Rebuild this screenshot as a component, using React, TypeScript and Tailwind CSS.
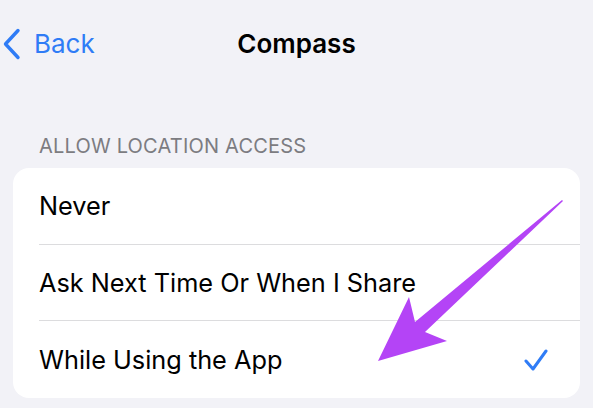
import React from "react";

const options = [
  { id: 1, label: "Never", checked: false },
  { id: 2, label: "Ask Next Time Or When I Share", checked: false },
  { id: 3, label: "While Using the App", checked: true },
];

const App: React.FC = () => {
  return (
    <div
      className="relative w-[593px] h-[408px] overflow-hidden bg-[#f2f2f7]"
      style={{ fontFamily: "Inter, 'Liberation Sans', sans-serif" }}
    >
      {/* Nav bar */}
      <div className="relative flex items-center h-[44px] mt-[22px]">
        <div className="flex items-center gap-[13px] pl-[3px] text-[#2f7cf6]">
          <svg width="18" height="32" viewBox="0 0 18 32" fill="none">
            <path d="M15 2.5 L2.5 16 L15 29.5" stroke="#2f7cf6" strokeWidth="3.4" strokeLinecap="round" strokeLinejoin="round" />
          </svg>
          <span className="text-[26px] leading-none">Back</span>
        </div>
        <div className="absolute inset-x-0 text-center text-[26px] font-semibold leading-none text-black">
          Compass
        </div>
      </div>

      {/* Section header */}
      <p className="mt-[70px] pl-[39px] text-[20px] leading-none text-[#7c7c81] tracking-[0.01em]">
        ALLOW LOCATION ACCESS
      </p>

      {/* Options card */}
      <div className="mx-[13px] mt-[12px] w-[567px] rounded-[16px] bg-white">
        {options.map((o, i) => (
          <div key={o.id} className="pl-[26px]">
            <div
              className={
                "flex items-center justify-between pr-[32px] " +
                (i === 1 ? "h-[76px] " : "h-[77px] ") +
                (i < options.length - 1 ? "border-b border-[#dcdcde]" : "")
              }
            >
              <span className="text-[25.3px] leading-none text-black">{o.label}</span>
              {o.checked && (
                <svg width="24" height="22" viewBox="0 0 24 22" fill="none">
                  <path d="M2 12 L9 20 L22 2" stroke="#2f7cf6" strokeWidth="3" strokeLinecap="round" strokeLinejoin="round" />
                </svg>
              )}
            </div>
          </div>
        ))}
      </div>

      {/* Purple annotation arrow */}
      <svg className="absolute inset-0" width="593" height="408" viewBox="0 0 593 408">
        <polygon
          points="563,201 425,332 447,341 378,361 409,297 415,322 562,200"
          fill="#b444f6"
        />
      </svg>
    </div>
  );
};

export default App;
